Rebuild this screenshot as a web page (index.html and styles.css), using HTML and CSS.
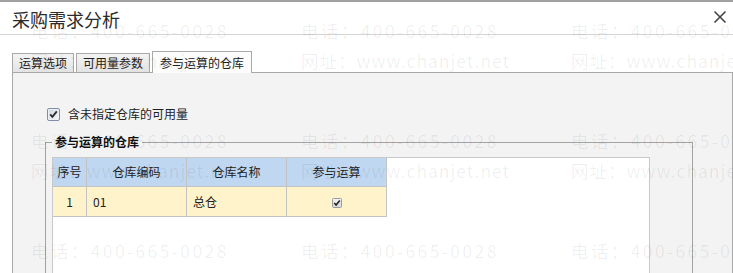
FILE: index.html
```html
<!DOCTYPE html>
<html lang="zh">
<head>
<meta charset="utf-8">
<title>采购需求分析</title>
<link rel="stylesheet" href="styles.css">
</head>
<body>
<div class="window">
  <header class="titlebar">
    <span class="title">采购需求分析</span>
    <svg class="close" width="14" height="14" viewBox="0 0 14 14"><path d="M1.5 1.5 L12.5 12.5 M12.5 1.5 L1.5 12.5" stroke="#444" stroke-width="1.6" fill="none"/></svg>
  </header>
  <div class="body-area">
    <div class="tabs">
      <div class="tab">运算选项</div>
      <div class="tab">可用量参数</div>
      <div class="tab active">参与运算的仓库</div>
    </div>
    <div class="panel">
      <label class="check-row">
        <svg class="cb" width="13" height="13" viewBox="0 0 13 13">
          <defs><linearGradient id="cbg" x1="0" y1="0" x2="1" y2="1"><stop offset="0" stop-color="#cfd9e6"/><stop offset="1" stop-color="#f2f5f9"/></linearGradient></defs>
          <rect x="0.5" y="0.5" width="12" height="12" rx="1.5" fill="#eef2f7" stroke="#7f8fa8"/>
          <rect x="2" y="2" width="9" height="9" fill="url(#cbg)"/>
          <path d="M3.2 6.4 L5.4 8.8 L9.8 3.4" stroke="#2d2d2d" stroke-width="1.8" fill="none"/>
        </svg>
        <span>含未指定仓库的可用量</span>
      </label>
      <fieldset class="group">
        <legend>参与运算的仓库</legend>
        <div class="grid">
          <table class="wh-table">
            <colgroup><col class="c1"><col class="c2"><col class="c3"><col class="c4"></colgroup>
            <thead>
              <tr><th>序号</th><th>仓库编码</th><th>仓库名称</th><th>参与运算</th></tr>
            </thead>
            <tbody>
              <tr>
                <td class="num">1</td>
                <td class="txt">01</td>
                <td class="txt">总仓</td>
                <td class="mid">
                  <svg class="cb-small" width="10" height="10" viewBox="0 0 10 10">
                    <defs><linearGradient id="sg" x1="0" y1="0" x2="0" y2="1"><stop offset="0" stop-color="#f4f4f4"/><stop offset="1" stop-color="#d6d6d6"/></linearGradient></defs>
                    <rect x="0.5" y="0.5" width="9" height="9" rx="1" fill="url(#sg)" stroke="#9a9a9a"/>
                    <path d="M2.3 5 L4.1 7 L7.8 2.6" stroke="#222" stroke-width="1.6" fill="none"/>
                  </svg>
                </td>
              </tr>
            </tbody>
          </table>
        </div>
      </fieldset>
    </div>
  </div>
  <div class="watermark" aria-hidden="true">
    <div class="wm"><div>电话：400-665-0028</div><div class="url">网址：www.chanjet.net</div></div>
    <div class="wm"><div>电话：400-665-0028</div><div class="url">网址：www.chanjet.net</div></div>
    <div class="wm"><div>电话：400-665-0028</div><div class="url">网址：www.chanjet.net</div></div>
    <div class="wm"><div>电话：400-665-0028</div><div class="url">网址：www.chanjet.net</div></div>
    <div class="wm"><div>电话：400-665-0028</div><div class="url">网址：www.chanjet.net</div></div>
    <div class="wm"><div>电话：400-665-0028</div><div class="url">网址：www.chanjet.net</div></div>
    <div class="wm"><div>电话：400-665-0028</div><div class="url">网址：www.chanjet.net</div></div>
    <div class="wm"><div>电话：400-665-0028</div><div class="url">网址：www.chanjet.net</div></div>
    <div class="wm"><div>电话：400-665-0028</div><div class="url">网址：www.chanjet.net</div></div>
  </div>
</div>
</body>
</html>
```
FILE: styles.css
```css
* { box-sizing: border-box; }
html, body { margin: 0; padding: 0; }
body {
  width: 733px;
  height: 273px;
  overflow: hidden;
  position: relative;
  background: #fff;
  font-family: "Noto Sans CJK SC", "Noto Sans", sans-serif;
  font-size: 12px;
  color: #222;
}
.window {
  height: 273px;
  display: flex;
  flex-direction: column;
}
.titlebar {
  height: 35px;
  border-top: 2px solid #a2a2a2;
  border-bottom: 1px solid #d6d6d6;
  display: flex;
  align-items: center;
  justify-content: space-between;
  padding: 0 6px 0 12px;
  flex: none;
}
.title {
  font-size: 18px;
  line-height: 22px;
  color: #2b2b2b;
  margin-top: 1px;
}
.close { display: block; margin-top: -2px; }
.body-area {
  flex: 1;
  display: flex;
  flex-direction: column;
  min-height: 0;
}
.tabs {
  display: flex;
  align-items: flex-end;
  gap: 2px;
  padding: 0 0 0 12px;
  height: 37px;
  flex: none;
  position: relative;
  z-index: 1;
}
.tab {
  border: 1px solid #a9a9a9;
  border-bottom: none;
  background: linear-gradient(#f4f4f4, #e3e3e3);
  line-height: 18px;
  padding: 0 6px;
  color: #222;
  white-space: nowrap;
}
.tab.active {
  background: #fcfcfc;
  padding: 2px 7px 1px;
  margin-bottom: -1px;
}
.panel {
  flex: 1;
  margin-left: 12px;
  border: 1px solid #a9a9a9;
  border-bottom: none;
  background: #f3f3f3;
  padding: 33px 0 0 34px;
  min-height: 0;
}
.check-row {
  display: flex;
  align-items: center;
  gap: 8px;
  height: 16px;
  line-height: 16px;
}
.cb { display: block; flex: none; }
.group {
  margin: 12px 39px 0 -2px;
  padding: 7px 0 0 6px;
  border: 1px solid #a3a3a3;
  height: 220px;
  min-width: 0;
}
.group legend {
  padding: 0 3px;
  font-weight: bold;
  font-size: 12px;
  line-height: 16px;
  color: #111;
}
.grid {
  width: 598px;
  height: 200px;
  background: #fff;
  border: 1px solid #c9c9c9;
}
.wh-table {
  border-collapse: separate;
  border-spacing: 0;
  table-layout: fixed;
  width: 334px;
}
.c1 { width: 34px; }
.c2, .c3, .c4 { width: 100px; }
.wh-table th, .wh-table td {
  padding: 0;
  border-right: 1px solid #c3c3c3;
  border-bottom: 1px solid #c3c3c3;
  font-weight: normal;
  white-space: nowrap;
}
.wh-table th {
  background: #bfd7f1;
  line-height: 28px;
  text-align: center;
  color: #222;
}
.wh-table td {
  background: #fff3cb;
  line-height: 29px;
  height: 30px;
}
.wh-table td.num { text-align: center; }
.wh-table td.txt { padding-left: 6px; }
.wh-table td.mid { text-align: center; }
.cb-small { display: inline-block; vertical-align: middle; margin-top: -2px; }
.watermark {
  position: absolute;
  inset: 0;
  pointer-events: none;
  display: grid;
  grid-template-columns: repeat(3, 270px);
  grid-auto-rows: 110px;
  padding: 16px 0 0 31px;
  color: rgba(0, 0, 0, 0.065);
  font-size: 17.5px;
  letter-spacing: 2.4px;
  z-index: 5;
}
.wm div {
  line-height: 30px;
  white-space: nowrap;
}
.wm .url { letter-spacing: 1px; }
```
